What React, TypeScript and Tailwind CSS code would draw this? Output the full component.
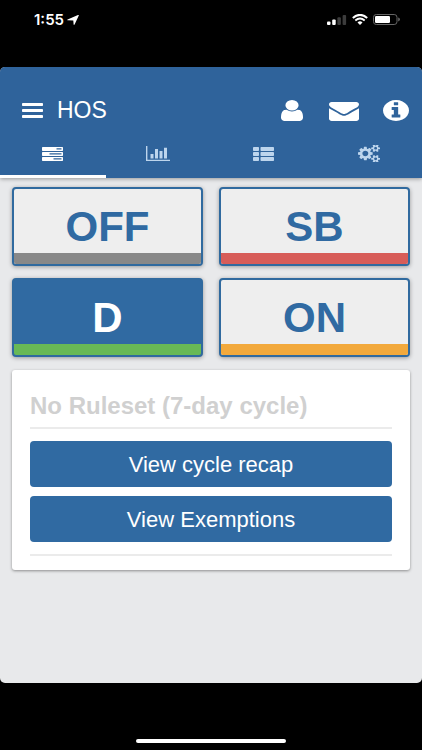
import React from 'react';
import clsx from 'clsx';

interface IconProps {
  className?: string;
}

const MenuIcon: React.FC<IconProps> = ({ className }) => (
  <svg viewBox="0 0 21 15" preserveAspectRatio="none" fill="currentColor" className={className}>
    <rect width="21" height="3" rx="0.8" />
    <rect y="6" width="21" height="3" rx="0.8" />
    <rect y="12" width="21" height="3" rx="0.8" />
  </svg>
);

const UserIcon: React.FC<IconProps> = ({ className }) => (
  <svg viewBox="256 128 1280 1536" preserveAspectRatio="none" fill="currentColor" className={className}>
    <path d="M1536 1399q0 109-62.5 187t-150.5 78h-854q-88 0-150.5-78t-62.5-187q0-85 8.5-160.5t31.5-152 58.5-131 94-89 134.5-34.5q131 128 313 128t313-128q76 0 134.5 34.5t94 89 58.5 131 31.5 152 8.5 160.5zm-256-887q0 159-112.5 271.5t-271.5 112.5-271.5-112.5-112.5-271.5 112.5-271.5 271.5-112.5 271.5 112.5 112.5 271.5z" />
  </svg>
);

const MailIcon: React.FC<IconProps> = ({ className }) => (
  <svg viewBox="0 256 1792 1408" preserveAspectRatio="none" fill="currentColor" className={className}>
    <path d="M1792 710v794q0 66-47 113t-113 47h-1472q-66 0-113-47t-47-113v-794q44 49 101 87 362 246 497 345 57 42 92.5 65.5t94.5 48 110 24.5h2q51 0 110-24.5t94.5-48 92.5-65.5q170-123 498-345 57-39 100-87zm0-294q0 79-49 151t-122 123q-376 261-468 325-10 7-42.5 31t-54 38.5-52 32.5-57.5 27-50 9h-2q-23 0-50-9t-57.5-27-52-32.5-54-38.5-42.5-31q-91-64-262-182.5t-205-142.5q-62-42-117-115.5t-55-136.5q0-78 41.5-130t118.5-52h1472q65 0 112.5 47t47.5 113z" />
  </svg>
);

const InfoIcon: React.FC<IconProps> = ({ className }) => (
  <svg viewBox="128 128 1536 1536" preserveAspectRatio="none" fill="currentColor" className={className}>
    <path d="M1152 1376v-160q0-14-9-23t-23-9h-96v-512q0-14-9-23t-23-9h-320q-14 0-23 9t-9 23v160q0 14 9 23t23 9h96v320h-96q-14 0-23 9t-9 23v160q0 14 9 23t23 9h448q14 0 23-9t9-23zm-128-896v-160q0-14-9-23t-23-9h-192q-14 0-23 9t-9 23v160q0 14 9 23t23 9h192q14 0 23-9t9-23zm640 416q0 209-103 385.5t-279.5 279.5-385.5 103-385.5-103-279.5-279.5-103-385.5 103-385.5 279.5-279.5 385.5-103 385.5 103 279.5 279.5 103 385.5z" />
  </svg>
);

const TasksIcon: React.FC<IconProps> = ({ className }) => (
  <svg viewBox="0 0 21 14" preserveAspectRatio="none" fill="currentColor" fillRule="evenodd" className={className}>
    <path d="M0.6 0H20.4L21 0.6V3.4L20.4 4H0.6L0 3.4V0.6ZM14.5 1.2V2.6H19.5V1.2Z" />
    <path d="M0.6 5H20.4L21 5.6V8.4L20.4 9H0.6L0 8.4V5.6ZM7.5 6.2V7.6H19.5V6.2Z" />
    <path d="M0.6 10H20.4L21 10.6V13.4L20.4 14H0.6L0 13.4V10.6ZM11.5 11.2V12.6H19.5V11.2Z" />
  </svg>
);

const ChartIcon: React.FC<IconProps> = ({ className }) => (
  <svg viewBox="0 0 24 15" preserveAspectRatio="none" fill="currentColor" className={className}>
    <path d="M0 0H1.4V13.8H24V15H0ZM4.5 8H7.5V12.5H4.5ZM9 3H12V12.5H9ZM13.5 5H16.5V12.5H13.5ZM18 1.8H21V12.5H18Z" />
  </svg>
);

const ListIcon: React.FC<IconProps> = ({ className }) => (
  <svg viewBox="0 0 21 14" preserveAspectRatio="none" fill="currentColor" className={className}>
    <rect width="6" height="4" rx="0.8" />
    <rect x="7.5" width="13.5" height="4" rx="0.8" />
    <rect y="5" width="6" height="4" rx="0.8" />
    <rect x="7.5" y="5" width="13.5" height="4" rx="0.8" />
    <rect y="10" width="6" height="4" rx="0.8" />
    <rect x="7.5" y="10" width="13.5" height="4" rx="0.8" />
  </svg>
);

const CogsIcon: React.FC<IconProps> = ({ className }) => (
  <svg viewBox="0 76 1920 1640" preserveAspectRatio="none" fill="currentColor" className={className}>
    <path d="M896 896q0-106-75-181t-181-75-181 75-75 181 75 181 181 75 181-75 75-181zm768 512q0-52-38-90t-90-38-90 38-38 90q0 53 37.5 90.5t90.5 37.5 90.5-37.5 37.5-90.5zm0-1024q0-52-38-90t-90-38-90 38-38 90q0 53 37.5 90.5t90.5 37.5 90.5-37.5 37.5-90.5zm-384 421v185q0 10-7 19.5t-16 10.5l-155 24q-11 35-32 76 34 48 90 115 7 11 7 20 0 12-7 19-23 30-82.5 89.5t-78.5 59.5q-11 0-21-7l-115-90q-37 19-77 31-11 108-23 155-7 24-30 24h-186q-11 0-20-7.5t-10-17.5l-23-153q-34-10-75-31l-118 89q-7 7-20 7-11 0-21-8-144-133-144-160 0-9 7-19 10-14 41-53t47-61q-23-44-35-82l-152-24q-10-1-17-9.5t-7-19.5v-185q0-10 7-19.5t16-10.5l155-24q11-35 32-76-34-48-90-115-7-11-7-20 0-12 7-20 22-30 82-89t79-59q11 0 21 7l115 90q34-18 77-32 11-108 23-154 7-24 30-24h186q11 0 20 7.5t10 17.5l23 153q34 10 75 31l118-89q8-7 20-7 11 0 21 8 144 133 144 160 0 8-7 19-12 16-42 54t-45 60q23 48 34 82l152 23q10 2 17 10.5t7 19.5zm640 533v140q0 16-149 31-12 27-30 52 51 113 51 138 0 4-4 7-122 71-124 71-8 0-46-47t-52-68q-20 2-30 2t-30-2q-14 21-52 68t-46 47q-2 0-124-71-4-3-4-7 0-25 51-138-18-25-30-52-149-15-149-31v-140q0-16 149-31 13-29 30-52-51-113-51-138 0-4 4-7 4-2 35-20t59-34 30-16q8 0 46 46.5t52 67.5q20-2 30-2t30 2q51-71 92-112l6-2q4 0 124 70 4 3 4 7 0 25-51 138 17 23 30 52 149 15 149 31zm0-1024v140q0 16-149 31-12 27-30 52 51 113 51 138 0 4-4 7-122 71-124 71-8 0-46-47t-52-68q-20 2-30 2t-30-2q-14 21-52 68t-46 47q-2 0-124-71-4-3-4-7 0-25 51-138-18-25-30-52-149-15-149-31v-140q0-16 149-31 13-29 30-52-51-113-51-138 0-4 4-7 4-2 35-20t59-34 30-16q8 0 46 46.5t52 67.5q20-2 30-2t30 2q51-71 92-112l6-2q4 0 124 70 4 3 4 7 0 25-51 138 17 23 30 52 149 15 149 31z" />
  </svg>
);

const TABS = [
  { label: 'Duty status', Icon: TasksIcon, size: 'w-[21px] h-[14px]' },
  { label: 'Graph', Icon: ChartIcon, size: 'w-6 h-[15px]' },
  { label: 'Logs', Icon: ListIcon, size: 'w-[21px] h-[14px]' },
  { label: 'Settings', Icon: CogsIcon, size: 'w-[22px] h-[17px]' },
];

const STATUSES = [
  { code: 'OFF', bar: 'bg-[#888888]' },
  { code: 'SB', bar: 'bg-[#d75c58]' },
  { code: 'D', bar: 'bg-[#68b956]' },
  { code: 'ON', bar: 'bg-[#f2a93c]' },
];

const StatusBar: React.FC = () => (
  <div className="flex h-[67px] items-start justify-between pt-[10px] pl-[34px] pr-[22px] text-white">
    <div className="flex items-center gap-[3px]">
      <span className="font-['Inter',sans-serif] text-[15px] leading-[19px] font-semibold">1:55</span>
      <svg viewBox="0 0 12 10" preserveAspectRatio="none" fill="currentColor" className="h-[10px] w-3">
        <path d="M11.5 0Q12 0 11.8 0.6L7.6 9.5Q6.8 10.4 6.6 9.3L6.3 5.6L0.8 5.3Q-0.3 5 0.6 4.4L11 0.1Z" />
      </svg>
    </div>
    <div className="flex h-[19px] items-center gap-[5px]">
      <svg viewBox="0 0 20 10" fill="currentColor" className="h-[10px] w-5">
        <rect x="0" y="6.5" width="3.5" height="3.5" rx="1" />
        <rect x="5.2" y="4.5" width="3.5" height="5.5" rx="1" />
        <rect x="10.4" y="2.3" width="3.5" height="7.7" rx="1" className="fill-[#3c3c3c]" />
        <rect x="15.6" y="0" width="3.5" height="10" rx="1" className="fill-[#3c3c3c]" />
      </svg>
      <svg viewBox="0 0 16 11" preserveAspectRatio="none" className="h-[11px] w-4">
        <path d="M0.8 3.9Q8 -2.2 15.2 3.9" fill="none" stroke="currentColor" strokeWidth="2" />
        <path d="M3.3 6.5Q8 2.6 12.7 6.5" fill="none" stroke="currentColor" strokeWidth="1.9" />
        <path d="M5.5 8.4Q8 6.2 10.5 8.4L8 11Z" fill="currentColor" />
      </svg>
      <svg viewBox="0 0 27 11" className="h-[11px] w-[27px]">
        <rect x="0.5" y="0.5" width="23.5" height="10" rx="2.8" fill="none" stroke="#666666" />
        <rect x="2" y="2" width="15" height="7" rx="1.2" fill="currentColor" />
        <path d="M25.2 3.6Q27 4.2 27 5.5T25.2 7.4Z" fill="#666666" />
      </svg>
    </div>
  </div>
);

const Header: React.FC = () => (
  <header className="relative bg-[#2f639b] text-white shadow-[0_1px_4px_rgba(0,0,0,0.35)]">
    <div className="flex h-[65px] items-end justify-between pr-[13px] pb-[11px] pl-[22px]">
      <div className="flex h-[21px] items-center gap-[14px]">
        <button type="button" aria-label="Menu">
          <MenuIcon className="block h-[15px] w-[21px]" />
        </button>
        <h1 className="text-[23px] leading-[21px]">HOS</h1>
      </div>
      <div className="flex items-end">
        <button type="button" aria-label="Profile" className="mr-[26px]">
          <UserIcon className="block h-[21px] w-[22px]" />
        </button>
        <button type="button" aria-label="Messages" className="mr-6">
          <MailIcon className="block h-[19px] w-[30px]" />
        </button>
        <button type="button" aria-label="Information">
          <InfoIcon className="block h-[21px] w-[26px]" />
        </button>
      </div>
    </div>
    <nav className="grid h-[46px] grid-cols-4">
      {TABS.map(({ label, Icon, size }, i) => (
        <button
          key={label}
          type="button"
          aria-label={label}
          className={clsx(
            'flex items-center justify-center border-b-[3px]',
            i === 0 ? 'border-white text-white' : 'border-transparent text-[#bdd5ed]'
          )}
        >
          <Icon className={size} />
        </button>
      ))}
    </nav>
  </header>
);

const DutyButtons: React.FC = () => (
  <section className="grid grid-cols-2 gap-x-4 gap-y-3">
    {STATUSES.map(({ code, bar }) => (
      <button
        key={code}
        type="button"
        aria-pressed={code === 'D'}
        className={clsx(
          'flex h-[79px] flex-col overflow-hidden rounded border-2 border-[#306a9f] shadow-[0_1px_4px_rgba(0,0,0,0.35)]',
          code === 'D' ? 'bg-[#306aa2] text-white' : 'bg-[#eeeeee] text-[#306aa2]'
        )}
      >
        <span className="w-full flex-1 pt-[13px] text-[42px] leading-[50px] font-bold">{code}</span>
        <span className={clsx('h-[11px] w-full shrink-0', bar)} />
      </button>
    ))}
  </section>
);

const RulesetCard: React.FC = () => (
  <section className="mt-[13px] rounded-[3px] bg-white px-[18px] pt-6 pb-[14px] shadow-[0_1px_3px_rgba(0,0,0,0.4)]">
    <h2 className="border-b-2 border-[#ebebeb] pb-[9px] text-2xl leading-6 font-bold text-[#d0d0d0]">
      No Ruleset (7-day cycle)
    </h2>
    <div className="flex flex-col gap-[9px] border-b-2 border-[#ebebeb] pt-3 pb-3">
      <button type="button" className="h-[46px] rounded bg-[#306aa2] text-[22px] text-white">
        View cycle recap
      </button>
      <button type="button" className="h-[46px] rounded bg-[#306aa2] text-[22px] text-white">
        View Exemptions
      </button>
    </div>
  </section>
);

export default function App() {
  return (
    <div className="flex min-h-screen flex-col bg-black font-['Liberation_Sans',Arial,sans-serif]">
      <StatusBar />
      <div className="flex flex-1 flex-col overflow-hidden rounded-[5px] bg-[#e8e9eb]">
        <Header />
        <main className="flex-1 px-3 pt-[9px]">
          <DutyButtons />
          <RulesetCard />
        </main>
      </div>
      <div className="flex h-[67px] items-end justify-center pb-[7px]">
        <div className="h-[4px] w-[150px] rounded-full bg-white" />
      </div>
    </div>
  );
}
